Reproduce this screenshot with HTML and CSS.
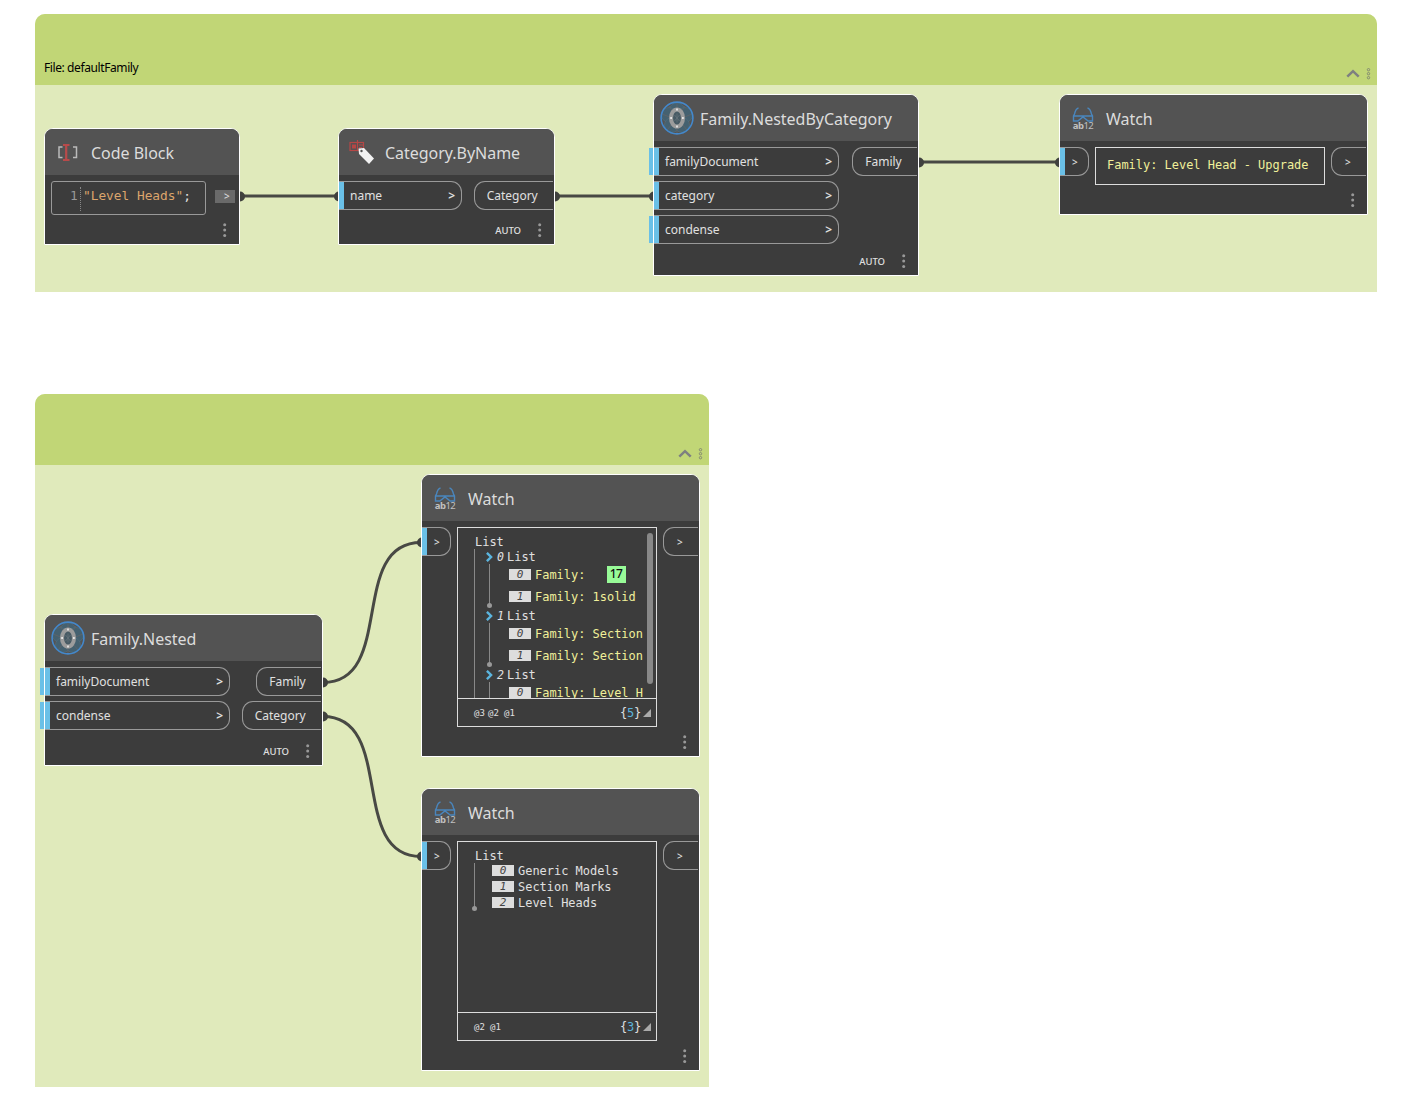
FILE: index.html
```html
<!DOCTYPE html>
<html lang="en">
<head>
<meta charset="utf-8">
<title>Family graph</title>
<link rel="stylesheet" href="styles.css">
</head>
<body>
<svg class="defs" width="0" height="0" aria-hidden="true">
  <symbol id="glasses" viewBox="0 0 22 15"><g fill="none" stroke="#4a86bd" stroke-width="1.400"><path d="M6.500 1C4 1.500 3.200 4 2.500 7L1.500 9v5h4.300L11 10l5.200 4h4.300V9l-1-2C18.800 4 18 1.500 15.500 1M1.500 9h19"/></g></symbol>
  <symbol id="family" viewBox="0 0 34 34">
    <g fill="#456170" stroke="#55717f" stroke-width=".6"><circle cx="17" cy="9" r="7.500"/><circle cx="9" cy="14" r="7.500"/><circle cx="25" cy="14" r="7.500"/><circle cx="12" cy="24" r="7.500"/><circle cx="22" cy="24" r="7.500"/></g>
    <path d="M2 13 17 19 32 13M17 1v32M7 29 17 17 27 29M9 5l8 12 8-12" fill="none" stroke="#5c646a" stroke-width="1"/>
    <circle cx="17" cy="17" r="15.900" fill="none" stroke="#4388cc" stroke-width="1.600"/>
    <ellipse cx="17" cy="17" rx="6" ry="8.600" fill="#475a64" stroke="#9c9c9c" stroke-width="4"/>
    <path d="M17 7.500v2M17 24.500v2M10.200 17h1.800M22 17h1.800" stroke="#e5e5e5" stroke-width="1.800"/>
    <path d="M17 12.500v9M14.500 14l5 6M19.500 14l-5 6" stroke="#66727a" stroke-width=".8"/>
  </symbol>
  <symbol id="dots" viewBox="0 0 4 14"><g fill="#999"><circle cx="1.700" cy="1.800" r="1.500"/><circle cx="1.700" cy="7" r="1.500"/><circle cx="1.700" cy="12.500" r="1.500"/></g></symbol>
  <symbol id="collapse" viewBox="0 0 26 12"><path d="m1.300 8.700 5.700-5.500 5.700 5.500" fill="none" stroke="#7e8080" stroke-width="2.500"/><g fill="none" stroke="#858b72" stroke-width="1"><circle cx="22.500" cy="1.700" r="1.200"/><circle cx="22.500" cy="5.700" r="1.200"/><circle cx="22.500" cy="9.700" r="1.200"/></g></symbol>
  <symbol id="chev" viewBox="0 0 7 10"><path d="m.9 .8 4.200 4.200L.9 9.200" fill="none" stroke="#5bb5df" stroke-width="2.400"/></symbol>
</svg>

<main class="canvas">
  <section class="group group-file">
    <header class="group-head"><span class="group-name">File: defaultFamily</span><svg class="group-tools"><use href="#collapse"/></svg></header>
  </section>
  <section class="group group-nested">
    <header class="group-head"><span class="group-name"></span><svg class="group-tools"><use href="#collapse"/></svg></header>
  </section>

  <svg class="wires" width="1412" height="1112">
    <g fill="none" stroke="#484944" stroke-width="3">
      <path d="M240 196H339M555 196H654M919 162H1060"/>
      <path d="M323 682.500C396 682.500 348 542.500 421 542.500M323 716.500C396 716.500 348 856.500 421 856.500"/>
    </g>
    <g fill="#40413e">
      <circle cx="240" cy="196.500" r="5"/><circle cx="339" cy="196.500" r="5"/><circle cx="555" cy="196.500" r="5"/><circle cx="654" cy="196.500" r="5"/>
      <circle cx="919" cy="162.500" r="5"/><circle cx="1060" cy="162.500" r="5"/>
      <circle cx="323" cy="682.500" r="5"/><circle cx="323" cy="716.500" r="5"/><circle cx="422" cy="542.500" r="5"/><circle cx="422" cy="856.500" r="5"/>
    </g>
  </svg>

  <article class="node n-code">
    <header class="node-head"><span class="icon"><svg width="22" height="20" viewBox="0 0 22 20"><path d="M5.500 5H2v10.500h3.500M16 5h3.500v10.500H16" fill="none" stroke="#bbb" stroke-width="1.500"/><path d="M6 3h6.500M6 18h6.500M9.200 3v15" stroke="#b84a4a" stroke-width="2.200" fill="none"/></svg></span><h2>Code Block</h2></header>
    <div class="node-body code-body">
      <div class="editor"><span class="line-no">1</span><code><span class="str">"Level Heads"</span>;</code></div>
      <div class="code-out">&gt;</div>
    </div>
    <footer class="node-foot"><svg class="dots"><use href="#dots"/></svg></footer>
  </article>

  <article class="node n-category">
    <header class="node-head"><span class="icon"><svg width="28" height="26" viewBox="0 0 28 26"><g fill="none" stroke="#b54746" stroke-width="1.200"><rect x="2" y="3.500" width="13.500" height="8"/><path d="M9.500 1v10M11 6h4M11 8.500h3"/></g><rect x="4" y="5.500" width="4" height="4" fill="#b54746"/><path d="m10.500 9.500 5.500-.5 10 10.500-5 5.500-10-10z" fill="#f2f2f2"/><circle cx="13.500" cy="12" r="1.200" fill="#555"/></svg></span><h2>Category.ByName</h2></header>
    <div class="node-body">
      <div class="inputs"><div class="port in"><span>name</span><b>&gt;</b></div></div>
      <div class="outputs"><div class="port out">Category</div></div>
    </div>
    <footer class="node-foot"><span>AUTO</span><svg class="dots"><use href="#dots"/></svg></footer>
  </article>

  <article class="node n-bycat">
    <header class="node-head"><span class="icon"><svg width="34" height="34"><use href="#family"/></svg></span><h2>Family.NestedByCategory</h2></header>
    <div class="node-body">
      <div class="inputs"><div class="port in open"><span>familyDocument</span><b>&gt;</b></div><div class="port in"><span>category</span><b>&gt;</b></div><div class="port in open"><span>condense</span><b>&gt;</b></div></div>
      <div class="outputs"><div class="port out">Family</div></div>
    </div>
    <footer class="node-foot"><span>AUTO</span><svg class="dots"><use href="#dots"/></svg></footer>
  </article>

  <article class="node watch n-watch1">
    <header class="node-head"><span class="icon glasses"><svg width="22" height="15"><use href="#glasses"/></svg><small><b>ab</b>12</small></span><h2>Watch</h2></header>
    <div class="node-body">
      <div class="port in bare">&gt;</div>
      <div class="value">Family: Level Head - Upgrade</div>
      <div class="port out bare">&gt;</div>
    </div>
    <footer class="node-foot"><svg class="dots"><use href="#dots"/></svg></footer>
  </article>

  <article class="node n-nested">
    <header class="node-head"><span class="icon"><svg width="34" height="34"><use href="#family"/></svg></span><h2>Family.Nested</h2></header>
    <div class="node-body">
      <div class="inputs"><div class="port in open"><span>familyDocument</span><b>&gt;</b></div><div class="port in open"><span>condense</span><b>&gt;</b></div></div>
      <div class="outputs"><div class="port out">Family</div><div class="port out">Category</div></div>
    </div>
    <footer class="node-foot"><span>AUTO</span><svg class="dots"><use href="#dots"/></svg></footer>
  </article>

  <article class="node watch n-watch2">
    <header class="node-head"><span class="icon glasses"><svg width="22" height="15"><use href="#glasses"/></svg><small><b>ab</b>12</small></span><h2>Watch</h2></header>
    <div class="node-body">
      <div class="port in bare">&gt;</div>
      <div class="list-box">
        <div class="list-view">
          <div class="tree">
            <div class="root">List</div>
            <div class="branch tall">
              <div class="sub"><div class="sub-head"><svg width="7" height="10"><use href="#chev"/></svg><i>0</i>List</div>
                <ul class="items"><li><i>0</i>Family: <mark>17</mark></li><li><i>1</i>Family: 1solid</li></ul></div>
              <div class="sub"><div class="sub-head"><svg width="7" height="10"><use href="#chev"/></svg><i>1</i>List</div>
                <ul class="items"><li><i>0</i>Family: Section</li><li><i>1</i>Family: Section</li></ul></div>
              <div class="sub"><div class="sub-head"><svg width="7" height="10"><use href="#chev"/></svg><i>2</i>List</div>
                <ul class="items"><li><i>0</i>Family: Level H</li><li></li></ul></div>
            </div>
          </div>
          <div class="scroll"></div>
        </div>
        <div class="list-foot"><span class="l3">@3</span><span class="l2">@2</span><span>@1</span><span class="count">{<em>5</em>}</span><svg width="8" height="8"><path d="M8 0v8H0z" fill="#aaa"/></svg></div>
      </div>
      <div class="port out bare">&gt;</div>
    </div>
    <footer class="node-foot"><svg class="dots"><use href="#dots"/></svg></footer>
  </article>

  <article class="node watch n-watch3">
    <header class="node-head"><span class="icon glasses"><svg width="22" height="15"><use href="#glasses"/></svg><small><b>ab</b>12</small></span><h2>Watch</h2></header>
    <div class="node-body">
      <div class="port in bare">&gt;</div>
      <div class="list-box">
        <div class="list-view">
          <div class="tree">
            <div class="root">List</div>
            <ul class="branch flat items"><li><i>0</i>Generic Models</li><li><i>1</i>Section Marks</li><li><i>2</i>Level Heads</li></ul>
          </div>
        </div>
        <div class="list-foot"><span class="l2">@2</span><span>@1</span><span class="count">{<em>3</em>}</span><svg width="8" height="8"><path d="M8 0v8H0z" fill="#aaa"/></svg></div>
      </div>
      <div class="port out bare">&gt;</div>
    </div>
    <footer class="node-foot"><svg class="dots"><use href="#dots"/></svg></footer>
  </article>
</main>
</body>
</html>
```

FILE: styles.css
```css
* { box-sizing: border-box; }
body { margin: 0; background: #fff; font-family: "Noto Sans", sans-serif; font-size: 12px; color: #e0e0e0; }
h2, ul { margin: 0; padding: 0; font-weight: 400; list-style: none; }
svg { display: block; flex: none; }
.defs { position: absolute; }
.canvas { position: relative; width: 1412px; height: 1112px; overflow: hidden; }

/* Groups */
.group { position: absolute; left: 35px; background: #e0eabb; border-radius: 10px 10px 0 0; overflow: hidden; }
.group-file { top: 14px; width: 1342px; height: 278px; }
.group-nested { top: 394px; width: 674px; height: 693px; }
.group-head { height: 71px; background: #c1d676; display: flex; justify-content: space-between; align-items: flex-end; padding: 0 5px 5px 9px; }
.group-name { color: #000; font-size: 12px; line-height: 16px; letter-spacing: -.4px; margin-bottom: 4px; }
.group-tools { width: 26px; height: 12px; }
.wires { position: absolute; left: 0; top: 0; }

/* Nodes */
.node { position: absolute; display: flex; flex-direction: column; border: 1px solid #fff; border-radius: 9px 9px 0 0; background: #3c3c3c; }
.n-code { left: 44px; top: 128px; width: 196px; height: 117px; }
.n-category { left: 338px; top: 128px; width: 217px; height: 117px; }
.n-bycat { left: 653px; top: 94px; width: 266px; height: 182px; }
.n-watch1 { left: 1059px; top: 94px; width: 309px; height: 121px; }
.n-nested { left: 44px; top: 614px; width: 279px; height: 152px; }
.n-watch2 { left: 421px; top: 474px; width: 279px; height: 283px; }
.n-watch3 { left: 421px; top: 788px; width: 279px; height: 283px; }
.node-head { flex: none; height: 46px; display: flex; align-items: center; background: #535353; border-radius: 8px 8px 0 0; }
.node-head h2 { font-size: 16px; line-height: 24px; color: #dcdcdc; padding-top: 2px; white-space: nowrap; letter-spacing: -.03px; }
.icon { width: 46px; display: flex; flex-direction: column; align-items: center; }
.glasses small { font-size: 9.500px; line-height: 7px; color: #c0c0c0; letter-spacing: -.5px; }
.node-body { flex: 1; min-height: 0; display: flex; justify-content: space-between; align-items: flex-start; padding: 6px 1px 0 0; }
.node-foot { position: absolute; right: 12px; bottom: 7px; display: flex; align-items: center; height: 14px; font-size: 9.500px; line-height: 14px; font-weight: 500; }
.node-foot span { margin-right: 17px; padding-top: 2px; }
.dots { width: 4px; height: 14px; }

/* Ports */
.inputs, .outputs { display: flex; flex-direction: column; gap: 5px; }
.outputs { align-items: flex-end; }
.inputs { width: 185px; }
.n-category .inputs { width: 123px; }
.port { position: relative; height: 29px; display: flex; align-items: center; border: 1px solid #999; line-height: 16px; white-space: nowrap; }
.in { border-left: 0; border-radius: 0 11px 11px 0; padding: 0 6px 0 11px; justify-content: space-between; }
.in b { font-weight: 600; }
.out { border-right: 0; border-radius: 11px 0 0 11px; padding: 0 15.300px 0 12px; letter-spacing: -.01px; }
.in::before { content: ""; position: absolute; left: 0; top: 0; width: 5px; height: 27px; background: #6ac0e7; }
.open::after { content: ""; position: absolute; left: -5px; top: 0; width: 4px; height: 27px; background: #6ac0e7; }
.bare { font-size: 10px; font-weight: 500; }
.in.bare { width: 29px; padding-left: 12px; }
.out.bare { width: 35px; padding-left: 13px; }

/* Code block */
.code-body { padding: 6px 4px 0 6px; }
.editor { width: 155px; height: 34px; border: 1px solid #999; border-radius: 3px; display: flex; padding: 5px 0 0 18px; font: 12.800px/18px "DejaVu Sans Mono", monospace; }
.line-no { color: #999; width: 11px; height: 24px; border-right: 1px dotted #888; }
.editor code { font: inherit; padding-left: 2px; }
.str { color: #dba56c; }
.code-out { width: 20px; height: 13px; margin-top: 9px; background: #6a6a6a; font-size: 10px; line-height: 13px; padding-left: 9px; }

/* Watch values */
.value { width: 230px; height: 38px; border: 1px solid #ddd; color: #f0f09a; font: 11.960px/35px "DejaVu Sans Mono", monospace; padding-left: 11px; white-space: nowrap; }
.list-box { width: 200px; height: 200px; border: 1px solid #ddd; display: flex; flex-direction: column; font: 11.960px/15px "DejaVu Sans Mono", monospace; }
.list-view { flex: 1; min-height: 0; display: flex; padding: 5px 3px 0 16px; overflow: hidden; }
.tree { width: 170px; overflow: hidden; flex: none; }
.root { padding: 2px 0 0 1px; height: 16px; }
.branch { border-left: 1px solid #888; }
.tall { padding-left: 11px; height: 170px; }
.sub { height: 59px; }
.sub-head { display: flex; height: 15px; align-items: center; padding-top: 1px; }
.sub-head svg { margin-top: -1px; }
.sub-head i { width: 10px; margin-left: 4px; font-size: 11.500px; }
.items li { display: flex; align-items: center; white-space: pre; }
.items i { width: 22px; height: 11px; margin: -1px 4px 0 0; background: #ddd; color: #444; font-size: 11px; line-height: 12px; text-align: center; }
.sub .items { position: relative; width: 158px; border-left: 1px solid #888; margin-left: 3px; height: 41px; padding-left: 19px; color: #f0f09a; }
.sub .items::after, .flat::after { content: ""; position: absolute; left: -3px; bottom: -3px; width: 5px; height: 5px; border-radius: 50%; background: #999; }
.sub .items li { height: 22px; }
.items mark { width: 19px; height: 17px; margin: -1px 0 0 14px; background: #98fb98; color: #111; font: 500 12px/16px "Noto Sans", sans-serif; text-align: center; letter-spacing: -.5px; }
.scroll { width: 6px; height: 151px; border-radius: 3px; background: #888; margin-left: auto; }
.n-watch3 .tree { overflow: visible; }
.flat { position: relative; height: 45px; padding-left: 17px; }
.flat li { height: 16px; }
.list-foot { flex: none; height: 28px; border-top: 1px solid #ddd; display: flex; align-items: center; padding: 0 5px 0 16px; font-size: 9px; }
.list-foot span { padding-top: 2px; }
.list-foot .l3 { width: 14px; }
.list-foot .l2 { width: 16px; }
.list-foot .count { margin-left: auto; margin-right: 2px; padding-top: 1px; font-size: 12px; letter-spacing: -.2px; }
.count em { color: #5bb5df; font-style: normal; }
```
